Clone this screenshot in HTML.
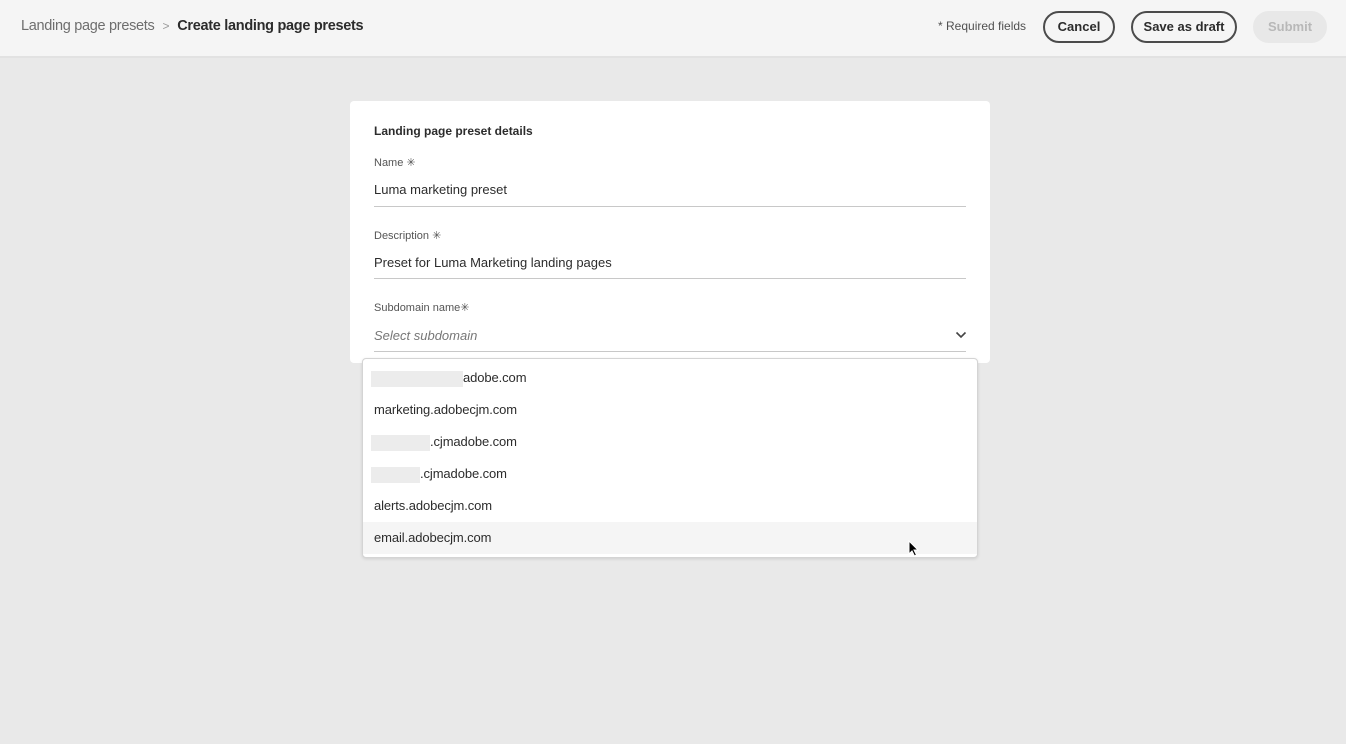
<!DOCTYPE html>
<html><head><style>
*{margin:0;padding:0;box-sizing:border-box}
body{width:1346px;height:744px;background:#e9e9e9;font-family:"Liberation Sans",sans-serif;color:#2c2c2c;position:relative;overflow:hidden}
.hdr{position:absolute;left:0;top:0;width:1346px;height:58px;background:#f5f5f5;border-bottom:2px solid #e2e2e2}
.bc{position:absolute;left:21px;top:18px;font-size:14.5px;color:#6e6e6e;letter-spacing:-0.3px}
.bc b{color:#2c2c2c;margin-left:4px}
.bc .sep{margin:0 4px 0 8px;color:#999;font-size:12px}
.req{position:absolute;left:938px;top:19px;font-size:12px;color:#505050}
.btn{position:absolute;top:11px;height:32px;border:2px solid #4b4b4b;border-radius:16px;font-size:13px;font-weight:bold;line-height:28px;text-align:center;color:#2c2c2c}
.card{position:absolute;left:350px;top:101px;width:640px;height:262px;background:#fff;border-radius:4px}
.t{position:absolute;left:24px;font-size:12px}
.lab{position:absolute;left:24px;font-size:11px;color:#555}
.val{position:absolute;left:24px;font-size:13px}
.line{position:absolute;left:24px;width:592px;height:1px;background:#c8c8c8}
.dd{position:absolute;left:362px;top:358px;width:616px;height:200px;background:#fff;border:1px solid #d4d4d4;border-radius:4px;box-shadow:0 1px 3px rgba(0,0,0,.12)}
.it{position:absolute;left:11px;height:32px;font-size:13px;line-height:32px;width:614px;letter-spacing:-0.1px}
.bl{display:inline-block;height:16px;background:#ececec;vertical-align:middle;margin-left:-3px}
</style></head><body>
<div class="hdr">
<div class="bc">Landing page presets<span class="sep">&gt;</span><b>Create landing page presets</b></div>
<div class="req">* Required fields</div>
<div class="btn" style="left:1043px;width:72px">Cancel</div>
<div class="btn" style="left:1131px;width:106px">Save as draft</div>
<div class="btn" style="left:1253px;width:74px;border-color:#e8e8e8;background:#e8e8e8;color:#b8b8b8">Submit</div>
</div>
<div class="card">
<div class="t" style="top:23px;font-weight:bold">Landing page preset details</div>
<div class="lab" style="top:55px">Name ✳</div>
<div class="val" style="top:81px">Luma marketing preset</div>
<div class="line" style="top:105px"></div>
<div class="lab" style="top:128px">Description ✳</div>
<div class="val" style="top:154px">Preset for Luma Marketing landing pages</div>
<div class="line" style="top:177px"></div>
<div class="lab" style="top:200px">Subdomain name✳</div>
<div class="val" style="top:227px;font-style:italic;color:#777">Select subdomain</div>
<svg style="position:absolute;left:605px;top:230px" width="12" height="8" viewBox="0 0 12 8"><path d="M1.5 1.5L6 6l4.5-4.5" fill="none" stroke="#444" stroke-width="1.6"/></svg>
<div class="line" style="top:250px"></div>
</div>
<div class="dd">
<div class="it" style="top:3px"><span class="bl" style="width:92px"></span>adobe.com</div>
<div class="it" style="top:35px">marketing.adobecjm.com</div>
<div class="it" style="top:67px"><span class="bl" style="width:59px"></span>.cjmadobe.com</div>
<div class="it" style="top:99px"><span class="bl" style="width:49px"></span>.cjmadobe.com</div>
<div class="it" style="top:131px">alerts.adobecjm.com</div>
<div style="position:absolute;left:0;top:163px;width:614px;height:32px;background:#f5f5f5"></div>
<div class="it" style="top:163px">email.adobecjm.com</div>
</div>
<svg style="position:absolute;left:908px;top:540px" width="12" height="18" viewBox="0 0 12 18"><path d="M1 1v13l3-3 2.5 5 2-1-2.5-5h4z" fill="#000" stroke="#fff" stroke-width="1"/></svg>
</body></html>
